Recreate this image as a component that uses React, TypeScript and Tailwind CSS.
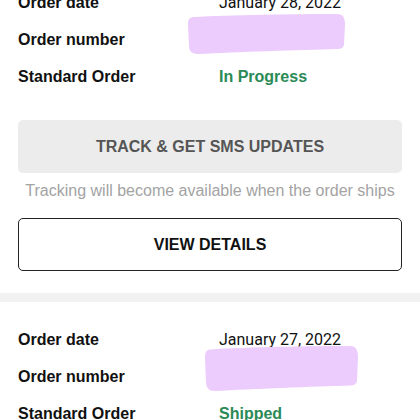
import React from 'react';

type Order = {
  date: string;
  status: string;
};

// Purple brush stroke that hides the order number
function Redaction({ className }: { className: string }) {
  return (
    <svg className={className} viewBox="0 0 158 40" preserveAspectRatio="none" aria-hidden="true">
      <path
        d="M6 3 C40 1 110 0 150 0 C156 0 158 4 158 10 L157 30 C157 34 154 35 150 35 C110 36 50 38 10 40 C4 40 1 37 1 32 L0 10 C0 5 2 3 6 3 Z"
        fill="#eccbfd"
      />
    </svg>
  );
}

function Row({ label, children }: { label: string; children?: React.ReactNode }) {
  return (
    <div className="flex h-[37px] items-center">
      <div className="w-[201px] shrink-0 text-[16px] font-bold text-[#111]">{label}</div>
      <div className="relative flex-1">{children}</div>
    </div>
  );
}

function OrderRows({ order, redaction }: { order: Order; redaction: string }) {
  return (
    <div className="px-[18px]">
      <Row label="Order date">
        <span className="font-['Roboto',sans-serif] text-[16px] text-[#111]">{order.date}</span>
      </Row>
      <Row label="Order number">
        <Redaction className={redaction} />
        <span>&nbsp;</span>
      </Row>
      <Row label="Standard Order">
        <span className="text-[16px] font-bold text-[#2b8a56]">{order.status}</span>
      </Row>
    </div>
  );
}

export default function App() {
  return (
    <div className="h-[420px] w-[420px] overflow-hidden bg-white font-['Liberation_Sans',Arial,sans-serif]">
      <div className="-mt-[16px]">
        <OrderRows
          order={{ date: 'January 28, 2022', status: 'In Progress' }}
          redaction="absolute -left-[31px] -top-[14px] h-[40px] w-[157px]"
        />

        <div className="px-[18px] pt-[25px]">
          <button className="flex h-[53px] w-full items-center justify-center rounded-[5px] bg-[#ececec] text-[16px] font-bold text-[#555]">
            TRACK &amp; GET SMS UPDATES
          </button>
          <p className="mt-[8px] text-center text-[16px] leading-[20px] text-[#a3a3a3]">
            Tracking will become available when the order ships
          </p>
          <button className="mt-[17px] flex h-[53px] w-full items-center justify-center rounded-[5px] border border-[#222] text-[16px] font-bold text-[#111]">
            VIEW DETAILS
          </button>
        </div>

        <div className="mt-[22px] h-[9px] bg-[#f2f2f2]" />

        <div className="pt-[19px]">
          <OrderRows
            order={{ date: 'January 27, 2022', status: 'Shipped' }}
            redaction="absolute -left-[14px] -top-[19px] h-[45px] w-[153px]"
          />
        </div>
      </div>
    </div>
  );
}
